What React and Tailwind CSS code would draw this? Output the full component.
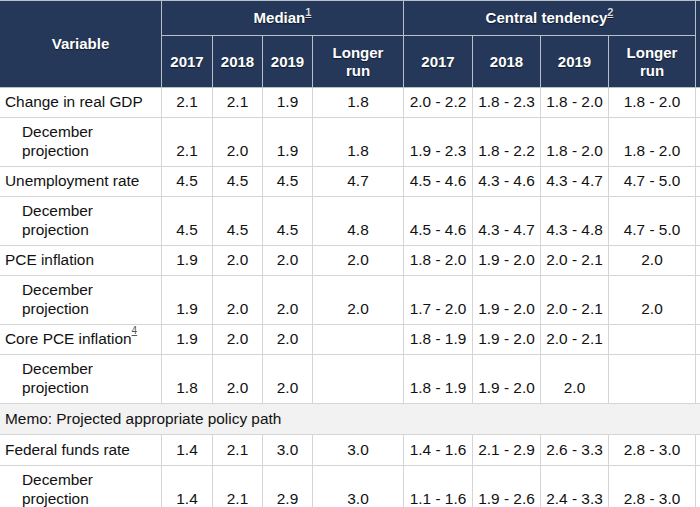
import React from "react";

const rows = [
  { type: "single", label: "Change in real GDP", m: ["2.1", "2.1", "1.9", "1.8"], c: ["2.0 - 2.2", "1.8 - 2.3", "1.8 - 2.0", "1.8 - 2.0"] },
  { type: "double", m: ["2.1", "2.0", "1.9", "1.8"], c: ["1.9 - 2.3", "1.8 - 2.2", "1.8 - 2.0", "1.8 - 2.0"] },
  { type: "single", label: "Unemployment rate", m: ["4.5", "4.5", "4.5", "4.7"], c: ["4.5 - 4.6", "4.3 - 4.6", "4.3 - 4.7", "4.7 - 5.0"] },
  { type: "double", m: ["4.5", "4.5", "4.5", "4.8"], c: ["4.5 - 4.6", "4.3 - 4.7", "4.3 - 4.8", "4.7 - 5.0"] },
  { type: "single", label: "PCE inflation", m: ["1.9", "2.0", "2.0", "2.0"], c: ["1.8 - 2.0", "1.9 - 2.0", "2.0 - 2.1", "2.0"] },
  { type: "double", m: ["1.9", "2.0", "2.0", "2.0"], c: ["1.7 - 2.0", "1.9 - 2.0", "2.0 - 2.1", "2.0"] },
  { type: "single", label: "Core PCE inflation", sup: "4", m: ["1.9", "2.0", "2.0", ""], c: ["1.8 - 1.9", "1.9 - 2.0", "2.0 - 2.1", ""] },
  { type: "double", m: ["1.8", "2.0", "2.0", ""], c: ["1.8 - 1.9", "1.9 - 2.0", "2.0", ""] },
  { type: "memo", label: "Memo: Projected appropriate policy path" },
  { type: "single", tall: true, label: "Federal funds rate", m: ["1.4", "2.1", "3.0", "3.0"], c: ["1.4 - 1.6", "2.1 - 2.9", "2.6 - 3.3", "2.8 - 3.0"] },
  { type: "double", m: ["1.4", "2.1", "2.9", "3.0"], c: ["1.1 - 1.6", "1.9 - 2.6", "2.4 - 3.3", "2.8 - 3.0"] },
];

const th =
  "border border-[#b9bfc9] bg-[#25385a] text-white font-bold text-[15px] leading-[18px] text-center align-middle [text-shadow:0_1px_1px_rgba(0,0,0,0.6)]";

export default function App() {
  return (
    <div
      className="w-[700px] h-[507px] overflow-hidden bg-white"
      style={{ fontFamily: '"Liberation Sans", Arial, sans-serif' }}
    >
      <table className="table-fixed border-collapse w-[716px] -ml-px text-[15.4px] leading-[19px] text-[#111]">
        <colgroup>
          <col className="w-[162px]" />
          <col className="w-[51px]" />
          <col className="w-[50px]" />
          <col className="w-[50px]" />
          <col className="w-[91px]" />
          <col className="w-[69px]" />
          <col className="w-[68px]" />
          <col className="w-[68px]" />
          <col className="w-[87px]" />
          <col className="w-[20px]" />
        </colgroup>
        <thead>
          <tr className="h-[35px]">
            <th rowSpan={2} className={th}>Variable</th>
            <th colSpan={4} className={th}>
              Median<sup className="text-[11px] underline text-[#d5d9e0] align-[2px] leading-none">1</sup>
            </th>
            <th colSpan={4} className={th}>
              Central tendency<sup className="text-[11px] underline text-[#d5d9e0] align-[2px] leading-none">2</sup>
            </th>
            <th rowSpan={2} className={th}></th>
          </tr>
          <tr className="h-[52px]">
            <th className={th}>2017</th>
            <th className={th}>2018</th>
            <th className={th}>2019</th>
            <th className={th}>Longer<br />run</th>
            <th className={th}>2017</th>
            <th className={th}>2018</th>
            <th className={th}>2019</th>
            <th className={th}>Longer<br />run</th>
          </tr>
        </thead>
        <tbody>
          {rows.map((r, i) => {
            if (r.type === "memo") {
              return (
                <tr key={i} className="h-[31px]">
                  <td colSpan={10} className="border border-[#d5d5d5] bg-[#f2f2f2] pl-[5px] pt-[4px] pb-[6px] align-middle">
                    {r.label}
                  </td>
                </tr>
              );
            }
            const dbl = r.type === "double";
            const cell = dbl
              ? "border border-[#d5d5d5] text-center align-bottom pb-[6px] pt-[4px]"
              : "border border-[#d5d5d5] text-center align-middle pb-[6px] pt-[4px]";
            return (
              <tr key={i} className={dbl ? "h-[49px]" : r.tall ? "h-[31px]" : "h-[30px]"}>
                {dbl ? (
                  <td className="border border-[#d5d5d5] pl-[22px] pt-[4px] pb-[6px] align-bottom">
                    December<br />projection
                  </td>
                ) : (
                  <td className="border border-[#d5d5d5] pl-[5px] pt-[4px] pb-[6px] align-middle whitespace-nowrap">
                    {r.label}
                    {r.sup && (
                      <sup className="text-[10px] underline text-[#555] align-[5px] leading-none">{r.sup}</sup>
                    )}
                  </td>
                )}
                {r.m.map((v, j) => (
                  <td key={"m" + j} className={cell}>{v}</td>
                ))}
                {r.c.map((v, j) => (
                  <td key={"c" + j} className={cell + " whitespace-nowrap"}>{v}</td>
                ))}
                <td className="border border-[#d5d5d5]"></td>
              </tr>
            );
          })}
        </tbody>
      </table>
    </div>
  );
}
